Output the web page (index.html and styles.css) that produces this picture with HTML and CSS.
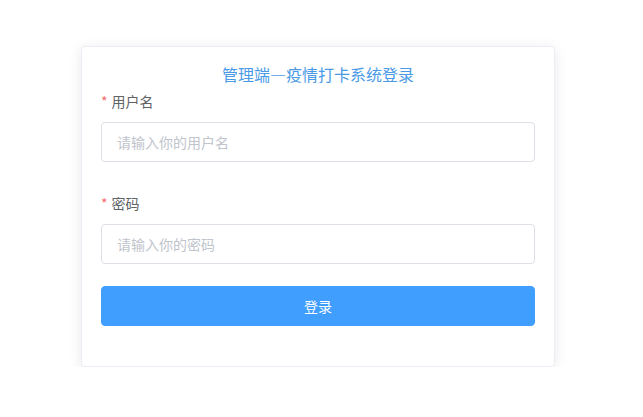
FILE: index.html
```html
<!DOCTYPE html>
<html lang="zh-CN">
<head>
<meta charset="utf-8">
<title>管理端—疫情打卡系统登录</title>
<link rel="stylesheet" href="styles.css">
</head>
<body>
<div class="page">
  <div class="card">
    <h3 class="title">管理端—疫情打卡系统登录</h3>
    <form class="form">
      <div class="item">
        <label class="label"><span class="req">*</span>用户名</label>
        <input class="input" type="text" placeholder="请输入你的用户名">
      </div>
      <div class="item">
        <label class="label"><span class="req">*</span>密码</label>
        <input class="input" type="password" placeholder="请输入你的密码">
      </div>
      <div class="item last">
        <button class="btn" type="button">登录</button>
      </div>
    </form>
  </div>
</div>
</body>
</html>
```
FILE: styles.css
```css
* { box-sizing: border-box; }
html, body {
  margin: 0;
  padding: 0;
  background: #fff;
  font-family: "Noto Sans CJK SC", "Liberation Sans", sans-serif;
}
.page {
  padding: 46px 0 0 81px;
}
.card {
  width: 474px;
  background: #fff;
  border: 1px solid #ebeef5;
  border-radius: 4px;
  box-shadow: 0 2px 14px 0 rgba(0, 0, 0, 0.09);
  padding: 20px 19px 20px 19px;
}
.title {
  margin: 0;
  font-size: 16px;
  font-weight: normal;
  line-height: 15px;
  text-align: center;
  color: #4a9ae6;
}
.form {
  margin: 0;
}
.item {
  display: flex;
  flex-direction: column;
  margin-bottom: 22px;
}
.item.last {
  margin-bottom: 20px;
}
.label {
  font-size: 14px;
  line-height: 38px;
  height: 40px;
  color: #606266;
}
.req {
  color: #f56c6c;
  margin-right: 4px;
}
.input {
  height: 40px;
  width: 100%;
  border: 1px solid #dcdfe6;
  border-radius: 4px;
  padding: 0 15px;
  font-size: 14px;
  font-family: inherit;
  color: #606266;
  outline: none;
  background: #fff;
}
.input::placeholder {
  color: #c0c4cc;
}
.btn {
  height: 40px;
  width: 100%;
  border: 1px solid #409eff;
  background: #409eff;
  color: #fff;
  border-radius: 4px;
  font-size: 14px;
  font-family: inherit;
  cursor: pointer;
}
```
